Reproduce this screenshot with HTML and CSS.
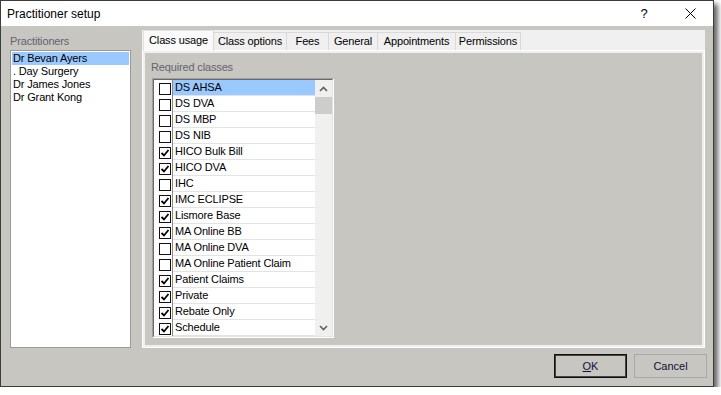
FILE: index.html
```html
<!DOCTYPE html>
<html>
<head>
<meta charset="utf-8">
<link rel="stylesheet" href="styles.css">
</head>
<body>
<div class="window">
  <div class="titlebar">
    <span class="title">Practitioner setup</span>
    <span class="capbtn help">?</span>
    <span class="capbtn close"><svg width="11" height="11" viewBox="0 0 11 11"><path d="M0.5 0.5 L10.5 10.5 M10.5 0.5 L0.5 10.5" stroke="#000" stroke-width="1" fill="none"/></svg></span>
  </div>
  <div class="client">
    <div class="main">
      <div class="left">
        <div class="label">Practitioners</div>
        <div class="listbox">
          <div class="item sel">Dr Bevan Ayers</div>
          <div class="item">. Day Surgery</div>
          <div class="item">Dr James Jones</div>
          <div class="item">Dr Grant Kong</div>
        </div>
      </div>
      <div class="tabctl">
        <div class="tabs">
          <div class="tab active">Class usage</div>
          <div class="tab t-opt">Class options</div>
          <div class="tab t-fees">Fees</div>
          <div class="tab t-gen">General</div>
          <div class="tab t-app">Appointments</div>
          <div class="tab t-perm">Permissions</div>
        </div>
        <div class="page">
          <div class="pagein">
            <div class="label">Required classes</div>
            <div class="checklist">
              <div class="clinner">
                <div class="rows">
                  <div class="row"><span class="cbcell"><span class="cb"></span></span><span class="txt sel">DS AHSA</span></div>
                  <div class="row"><span class="cbcell"><span class="cb"></span></span><span class="txt">DS DVA</span></div>
                  <div class="row"><span class="cbcell"><span class="cb"></span></span><span class="txt">DS MBP</span></div>
                  <div class="row"><span class="cbcell"><span class="cb"></span></span><span class="txt">DS NIB</span></div>
                  <div class="row"><span class="cbcell"><span class="cb on"><svg width="10" height="10" viewBox="0 0 10 10"><path d="M1.5 5 L4 7.5 L8.5 2" stroke="#000" stroke-width="1.8" fill="none"/></svg></span></span><span class="txt">HICO Bulk Bill</span></div>
                  <div class="row"><span class="cbcell"><span class="cb on"><svg width="10" height="10" viewBox="0 0 10 10"><path d="M1.5 5 L4 7.5 L8.5 2" stroke="#000" stroke-width="1.8" fill="none"/></svg></span></span><span class="txt">HICO DVA</span></div>
                  <div class="row"><span class="cbcell"><span class="cb"></span></span><span class="txt">IHC</span></div>
                  <div class="row"><span class="cbcell"><span class="cb on"><svg width="10" height="10" viewBox="0 0 10 10"><path d="M1.5 5 L4 7.5 L8.5 2" stroke="#000" stroke-width="1.8" fill="none"/></svg></span></span><span class="txt">IMC ECLIPSE</span></div>
                  <div class="row"><span class="cbcell"><span class="cb on"><svg width="10" height="10" viewBox="0 0 10 10"><path d="M1.5 5 L4 7.5 L8.5 2" stroke="#000" stroke-width="1.8" fill="none"/></svg></span></span><span class="txt">Lismore Base</span></div>
                  <div class="row"><span class="cbcell"><span class="cb on"><svg width="10" height="10" viewBox="0 0 10 10"><path d="M1.5 5 L4 7.5 L8.5 2" stroke="#000" stroke-width="1.8" fill="none"/></svg></span></span><span class="txt">MA Online BB</span></div>
                  <div class="row"><span class="cbcell"><span class="cb"></span></span><span class="txt">MA Online DVA</span></div>
                  <div class="row"><span class="cbcell"><span class="cb"></span></span><span class="txt">MA Online Patient Claim</span></div>
                  <div class="row"><span class="cbcell"><span class="cb on"><svg width="10" height="10" viewBox="0 0 10 10"><path d="M1.5 5 L4 7.5 L8.5 2" stroke="#000" stroke-width="1.8" fill="none"/></svg></span></span><span class="txt">Patient Claims</span></div>
                  <div class="row"><span class="cbcell"><span class="cb on"><svg width="10" height="10" viewBox="0 0 10 10"><path d="M1.5 5 L4 7.5 L8.5 2" stroke="#000" stroke-width="1.8" fill="none"/></svg></span></span><span class="txt">Private</span></div>
                  <div class="row"><span class="cbcell"><span class="cb on"><svg width="10" height="10" viewBox="0 0 10 10"><path d="M1.5 5 L4 7.5 L8.5 2" stroke="#000" stroke-width="1.8" fill="none"/></svg></span></span><span class="txt">Rebate Only</span></div>
                  <div class="row"><span class="cbcell"><span class="cb on"><svg width="10" height="10" viewBox="0 0 10 10"><path d="M1.5 5 L4 7.5 L8.5 2" stroke="#000" stroke-width="1.8" fill="none"/></svg></span></span><span class="txt">Schedule</span></div>
                </div>
                <div class="vscroll">
                  <div class="arrow"><svg width="9" height="6" viewBox="0 0 9 6"><path d="M1 5 L4.5 1.5 L8 5" stroke="#606060" stroke-width="1.6" fill="none"/></svg></div>
                  <div class="thumb"></div>
                  <div class="track"></div>
                  <div class="arrow"><svg width="9" height="6" viewBox="0 0 9 6"><path d="M1 1 L4.5 4.5 L8 1" stroke="#606060" stroke-width="1.6" fill="none"/></svg></div>
                </div>
              </div>
            </div>
          </div>
        </div>
      </div>
    </div>
    <div class="buttons">
      <button class="btn default"><u>O</u>K</button>
      <button class="btn">Cancel</button>
    </div>
  </div>
</div>
</body>
</html>
```

FILE: styles.css
```css
body {
  margin: 0;
  background: #fff;
  font-family: "Liberation Sans", Arial, sans-serif;
  font-size: 11px;
  letter-spacing: -0.15px;
  color: #000;
}

.window {
  width: 712px;
  height: 385px;
  border: 1px solid #3c3c3c;
  background: #c8c6c0;
  box-shadow: 4px 4px 5px rgba(0, 0, 0, 0.6);
  display: flex;
  flex-direction: column;
}

.titlebar {
  height: 25px;
  background: #fff;
  display: flex;
  align-items: center;
  font-size: 12px;
  letter-spacing: 0;
}

.title {
  flex: 1;
  padding-left: 6px;
}

.capbtn {
  width: 46px;
  height: 25px;
  display: flex;
  align-items: center;
  justify-content: center;
}

.help {
  font-size: 13px;
}

.client {
  flex: 1;
  display: flex;
  flex-direction: column;
}

.main {
  height: 322px;
  display: flex;
}

.left {
  width: 121px;
  margin-left: 9px;
  display: flex;
  flex-direction: column;
}

.label {
  color: #63636e;
  height: 13px;
  line-height: 13px;
}

.left .label {
  margin-top: 9px;
  margin-bottom: 2px;
}

.listbox {
  height: 295px;
  border: 1px solid #9a9a9a;
  background: #fff;
  padding: 1px;
}

.item {
  height: 13px;
  line-height: 13px;
  padding-left: 1px;
}

.item.sel {
  background: #99c9ff;
}

.tabctl {
  width: 563px;
  margin-left: 11px;
  margin-top: 4px;
  display: flex;
  flex-direction: column;
}

.tabs {
  height: 20px;
  display: flex;
  align-items: flex-end;
  padding-left: 1px;
  background: #f0f0f0;
  position: relative;
  z-index: 1;
}

.tab {
  box-sizing: border-box;
  height: 18px;
  line-height: 17px;
  text-align: center;
  background: #f0f0f0;
  border: 1px solid #d9d9d9;
  border-bottom: none;
  margin-left: -1px;
}

.tab.active {
  width: 71px;
  height: 21px;
  line-height: 18px;
  padding-bottom: 2px;
  margin-bottom: -1px;
  margin-left: 0;
  background: #fafafa;
  border-color: #e2e2e2;
}

.t-opt { width: 74px; }
.t-fees { width: 43px; }
.t-gen { width: 50px; }
.t-app { width: 79px; }
.t-perm { width: 66px; }

.page {
  flex: 1;
  background: #f0f0f0;
  border: 1px solid #fff;
  padding: 2px;
}

.pagein {
  height: 100%;
  box-sizing: border-box;
  background: #c8c6c0;
  padding: 8px 0 0 6px;
}

.pagein .label {
  margin-bottom: 4px;
}

.checklist {
  width: 180px;
  margin-left: 1px;
  border: 1px solid;
  border-color: #a0a0a0 #ffffff #ffffff #a0a0a0;
}

.clinner {
  display: flex;
  border: 1px solid;
  border-color: #696969 #e3e3e3 #e3e3e3 #696969;
  background: #fff;
}

.rows {
  width: 161px;
}

.row {
  height: 16px;
  display: flex;
}

.cbcell {
  width: 18px;
  border-right: 1px solid #8a8a8a;
  position: relative;
}

.cb {
  position: absolute;
  left: 5px;
  top: 3px;
  width: 10px;
  height: 10px;
  border: 1px solid #111;
  background: #fff;
}

.cb svg {
  display: block;
}

.txt {
  flex: 1;
  height: 15px;
  line-height: 15px;
  padding-left: 2px;
  border-bottom: 1px solid #e3e3e3;
}

.txt.sel {
  background: #99c9ff;
}

.vscroll {
  width: 17px;
  background: #f0f0f0;
  display: flex;
  flex-direction: column;
}

.arrow {
  height: 17px;
  display: flex;
  align-items: center;
  justify-content: center;
}

.thumb {
  height: 17px;
  background: #cdcdcd;
}

.track {
  flex: 1;
}

.buttons {
  display: flex;
  justify-content: flex-end;
  gap: 7px;
  padding: 6px 6px 0 0;
}

.btn {
  width: 73px;
  height: 24px;
  background: #c8c6c0;
  border: 1px solid #a8a8a8;
  font-family: "Liberation Sans", Arial, sans-serif;
  font-size: 11px;
  color: #10103a;
  padding: 0;
}

.btn.default {
  border-color: #111;
  box-shadow: inset 0 0 0 1px #444;
}
```
